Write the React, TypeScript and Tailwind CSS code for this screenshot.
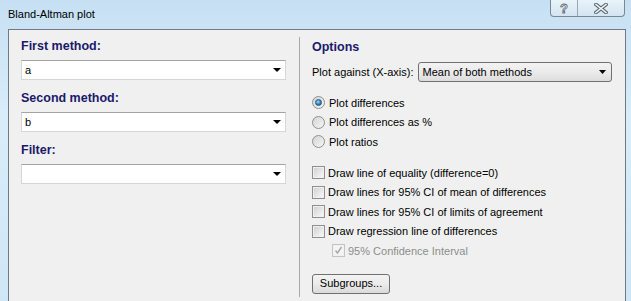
import React from 'react';

const font = { fontFamily: '"Liberation Sans", Arial, sans-serif' };

const Combo: React.FC<{ value?: string }> = ({ value }) => (
  <div className="flex h-[20px] items-center justify-between border border-[#d6d6d6] border-t-[#a3a3a3] bg-white pl-[3px] pr-[4px] text-[11px] text-black">
    <span>{value}</span>
    <svg width="8" height="4" viewBox="0 0 8 4"><path d="M0 0h8L4 4z" fill="#000" /></svg>
  </div>
);

const Label: React.FC<{ children: React.ReactNode; className?: string }> = ({ children, className }) => (
  <div className={`text-[12.5px] font-bold leading-[16px] text-[#1a1a6c] ${className ?? ''}`}>{children}</div>
);

const Radio: React.FC<{ checked?: boolean; label: string }> = ({ checked, label }) => (
  <div className="flex h-[19.5px] items-center gap-[4px]">
    <div className="flex h-[13px] w-[13px] items-center justify-center rounded-full border border-[#8e8f8f] bg-[linear-gradient(135deg,#d4d4d4,#f6f6f6)]">
      {checked && (
        <div className="h-[7px] w-[7px] rounded-full border border-[#1f5a8c] bg-[radial-gradient(circle_at_40%_35%,#9fdcf8,#2b79b8_60%,#164f80)]" />
      )}
    </div>
    <span>{label}</span>
  </div>
);

const Check: React.FC<{ label: string; disabled?: boolean; checked?: boolean; indent?: boolean }> = ({ label, disabled, checked, indent }) => (
  <div className={`flex h-[19.5px] items-center gap-[3px] ${indent ? 'pl-[20px]' : ''} ${disabled ? 'text-[#8d8d8d]' : ''}`}>
    <div className={`flex h-[13px] w-[13px] items-center justify-center border p-[1px] ${disabled ? 'border-[#c4c4c4]' : 'border-[#8e8f8f]'}`}>
      <div className={`relative h-full w-full ${disabled ? 'bg-[#f4f4f4]' : 'bg-[linear-gradient(135deg,#d2d2d2,#f7f7f7)]'}`}>
        {checked && (
          <svg className="absolute left-[0px] top-[0px]" width="9" height="9" viewBox="0 0 9 9">
            <path d="M1.5 4.5l2 2.5 4-6" fill="none" stroke="#a8a8a8" strokeWidth="1.4" />
          </svg>
        )}
      </div>
    </div>
    <span>{label}</span>
  </div>
);

const App: React.FC = () => {
  return (
    <div className="relative h-[301px] w-[631px] overflow-hidden bg-[linear-gradient(180deg,#c6e0f3,#d9edf9_40%,#cfe6f6)]" style={font}>
      {/* title bar */}
      <div className="flex h-[29px] items-start justify-between">
        <div className="pl-[8px] pt-[6px] text-[11px] text-black">Bland-Altman plot</div>
        <div className="mr-[6px] flex h-[17px] overflow-hidden rounded-b-[4px] border border-t-0 border-[#7b8894] bg-[linear-gradient(180deg,#e9f3fa,#d3e4f1)]">
          <div className="flex w-[27px] items-center justify-center border-r border-[#9aa7b3] text-[13px] font-bold leading-none text-[#f4f7fa] [-webkit-text-stroke:0.8px_#5f6a74]">?</div>
          <div className="flex w-[46px] items-center justify-center">
            <svg width="14" height="11" viewBox="0 0 14 11">
              <path d="M2 1.5l10 8M12 1.5l-10 8" stroke="#5f6a74" strokeWidth="3.6" strokeLinecap="square" />
              <path d="M2 1.5l10 8M12 1.5l-10 8" stroke="#f2f6f9" strokeWidth="1.6" strokeLinecap="square" />
            </svg>
          </div>
        </div>
      </div>

      {/* client area */}
      <div className="ml-[8px] flex h-[272px] w-[618px] border border-b-0 border-[#6f7a84] bg-[#f0f0f0] text-[11px] text-black">
        <div className="ml-[12px] w-[265px] pt-[8px]">
          <Label className="mb-[6px]">First method:</Label>
          <Combo value="a" />
          <Label className="mb-[6px] mt-[10px]">Second method:</Label>
          <Combo value="b" />
          <Label className="mb-[6px] mt-[10px]">Filter:</Label>
          <Combo />
        </div>

        <div className="ml-[13px] mt-[7px] h-[260px] w-px bg-[#a9a9a9]" />

        <div className="pl-[12px] pt-[9px]">
          <Label>Options</Label>
          <div className="mt-[7px] flex items-center gap-[5px]">
            <span>Plot against (X-axis):</span>
            <div className="flex h-[20px] w-[194px] items-center justify-between rounded-[3px] border border-[#707070] bg-[linear-gradient(180deg,#f3f3f3,#ebebeb_50%,#dcdcdc)] pl-[3px] pr-[5px]">
              <span>Mean of both methods</span>
              <svg width="7" height="4" viewBox="0 0 7 4"><path d="M0 0h7L3.5 4z" fill="#000" /></svg>
            </div>
          </div>

          <div className="mt-[11px]">
            <Radio checked label="Plot differences" />
            <Radio label="Plot differences as %" />
            <Radio label="Plot ratios" />
          </div>

          <div className="mt-[11.5px]">
            <Check label="Draw line of equality (difference=0)" />
            <Check label="Draw lines for 95% CI of mean of differences" />
            <Check label="Draw lines for 95% CI of limits of agreement" />
            <Check label="Draw regression line of differences" />
            <Check indent disabled checked label="95% Confidence Interval" />
          </div>

          <button className="mt-[13px] flex h-[20px] w-[78px] items-center justify-center rounded-[3px] border border-[#707070] bg-[linear-gradient(180deg,#f3f3f3,#ebebeb_50%,#dadada)] text-[11px]">
            Subgroups...
          </button>
        </div>
      </div>
    </div>
  );
};

export default App;
